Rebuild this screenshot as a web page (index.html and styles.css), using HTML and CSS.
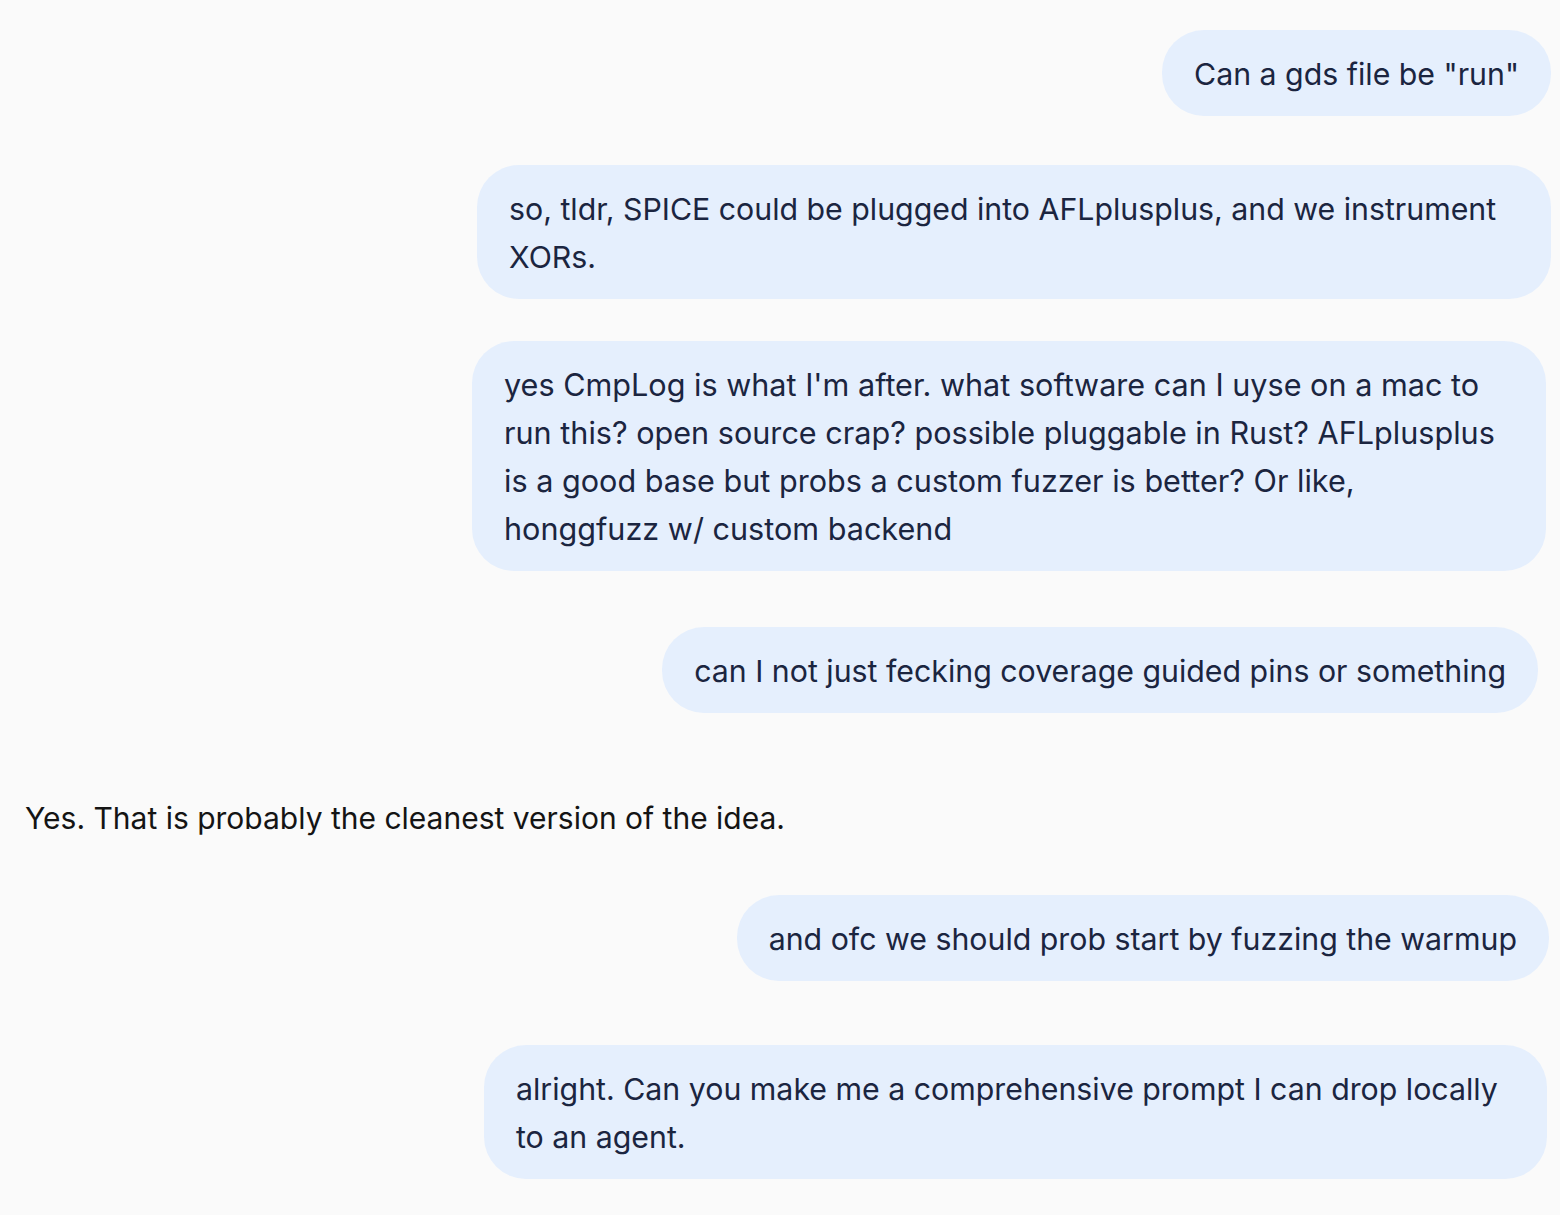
FILE: index.html
```html
<!DOCTYPE html>
<html lang="en">
<head>
<meta charset="utf-8">
<title>Chat</title>
<link rel="stylesheet" href="styles.css">
</head>
<body>
<main class="thread">
  <div class="msg user m1"><div class="bubble">Can a gds file be "run"</div></div>
  <div class="msg user m2"><div class="bubble">so, tldr, SPICE could be plugged into AFLplusplus, and we instrument XORs.</div></div>
  <div class="msg user m3"><div class="bubble">yes CmpLog is what I'm after. what software can I uyse on a mac to run this? open source crap? possible pluggable in Rust? AFLplusplus is a good base but probs a custom fuzzer is better? Or like, honggfuzz w/ custom backend</div></div>
  <div class="msg user m4"><div class="bubble">can I not just fecking coverage guided pins or something</div></div>
  <div class="msg assistant m5"><p class="answer">Yes. That is probably the cleanest version of the idea.</p></div>
  <div class="msg user m6"><div class="bubble">and ofc we should prob start by fuzzing the warmup</div></div>
  <div class="msg user m7"><div class="bubble">alright. Can you make me a comprehensive prompt I can drop locally to an agent.</div></div>
</main>
</body>
</html>
```

FILE: styles.css
```css
html, body {
  margin: 0;
  padding: 0;
  background: #fafafa;
}
body {
  font-family: Inter, "Noto Sans", "Liberation Sans", sans-serif;
  font-size: 30px;
  line-height: 48px;
  color: #1b2540;
}
.thread {
  display: flex;
  flex-direction: column;
  padding: 30px 0 0 25px;
}
.msg {
  display: flex;
}
.user {
  justify-content: flex-end;
}
.bubble {
  background: #e5effd;
  border-radius: 42px;
  padding: 20px 32px 18px;
  max-width: 1010px;
  font-size: 30.3px;
  box-sizing: content-box;
}
.assistant {
  justify-content: flex-start;
}
.answer {
  margin: 0;
  color: #141414;
}
.m1 { margin-right: 9px; }
.m2 { margin-top: 49px; margin-right: 9px; }
.m3 { margin-top: 42px; margin-right: 14px; }
.m3 .bubble { font-size: 30.6px; }
.m4 { margin-top: 56px; margin-right: 22px; }
.m5 { margin-top: 81px; }
.m6 { margin-top: 53px; margin-right: 11px; }
.m7 { margin-top: 64px; margin-right: 13px; }
.m7 .bubble { max-width: 999px; }
```
